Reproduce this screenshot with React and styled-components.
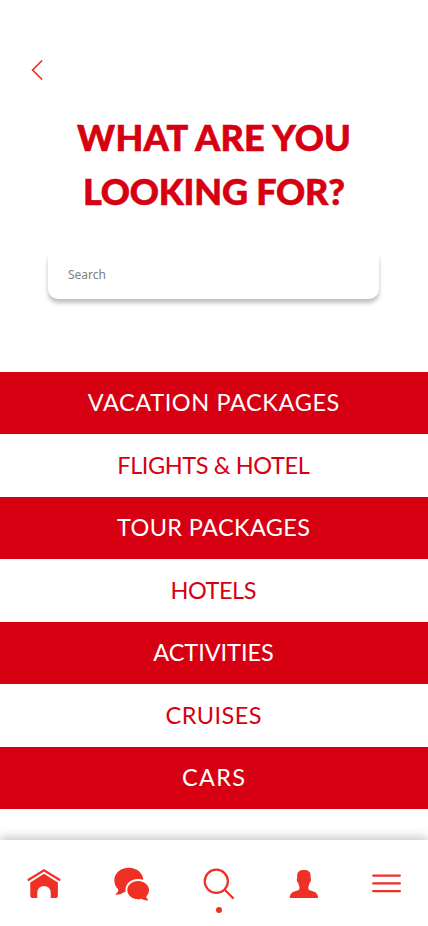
import styled, { createGlobalStyle } from "styled-components";

const GlobalStyle = createGlobalStyle`
  * {
    box-sizing: border-box;
  }

  body {
    margin: 0;
    background-color: #fff;
    font-family: Lato, sans-serif;
  }
`;

const Container = styled.div`
  width: 428px;
  height: 926px;
  display: flex;
  flex-direction: column;
  background-color: #fff;
  overflow: hidden;
`;

const BackButton = styled.button`
  width: 24px;
  height: 24px;
  margin: 58px 0 0 25px;
  padding: 0;
  border: none;
  background: none;

  svg {
    display: block;
  }
`;

const Title = styled.h1`
  height: 108px;
  margin: 28px 0 1px;
  color: #d70012;
  font-size: 36px;
  font-weight: 900;
  line-height: 54px;
  text-align: center;
  -webkit-text-stroke: 0.6px #d70012;
`;

const TitleLine = styled.span`
  display: block;
  letter-spacing: ${({ $spacing }) => $spacing}px;
  margin-right: ${({ $spacing }) => -$spacing}px;
`;

const SearchInput = styled.input`
  width: 331px;
  height: 50px;
  margin: 30px 0 0 48px;
  padding: 0 20px;
  border: none;
  border-radius: 10px;
  outline: none;
  background-color: #fff;
  box-shadow: 0 4px 4px rgba(0, 0, 0, 0.25);
  font-family: "Noto Sans", sans-serif;
  font-size: 12px;

  &::placeholder {
    color: #808080;
    opacity: 1;
  }
`;

const CategoryList = styled.ul`
  margin: 73px 0 0;
  padding: 0;
  list-style: none;
`;

const Category = styled.li`
  height: ${({ $filled }) => ($filled ? "62px" : "63px")};
  padding: 0 1px 2px 0;
  display: flex;
  align-items: center;
  justify-content: center;
  background-color: ${({ $filled }) => ($filled ? "#d70012" : "#fff")};
  color: ${({ $filled }) => ($filled ? "#fff" : "#d70012")};
  font-size: 23.5px;
`;

const CategoryName = styled.span`
  letter-spacing: ${({ $spacing }) => $spacing}px;
  margin-right: ${({ $spacing }) => -$spacing}px;
`;

const NavBar = styled.nav`
  height: 86px;
  margin-top: auto;
  padding: 24px 20px 0 24px;
  display: flex;
  justify-content: space-between;
  background-color: #fff;
  box-shadow: 0 -2px 10px rgba(0, 0, 0, 0.25);
`;

const NavItem = styled.button`
  width: 40px;
  height: 50px;
  padding: 0;
  display: flex;
  flex-direction: column;
  align-items: center;
  border: none;
  background: none;
  color: #ee3124;

  svg {
    flex: none;
  }
`;

const ActiveDot = styled.span`
  width: 6px;
  height: 6px;
  margin: 3px 0 0 6px;
  border-radius: 50%;
  background-color: #ee3124;
`;

const categories = [
  { name: "VACATION PACKAGES", spacing: 0.61 },
  { name: "FLIGHTS & HOTEL", spacing: -0.38 },
  { name: "TOUR PACKAGES", spacing: 0.36 },
  { name: "HOTELS", spacing: -0.5 },
  { name: "ACTIVITIES", spacing: -0.05 },
  { name: "CRUISES", spacing: 0.45 },
  { name: "CARS", spacing: 1.3 },
];

const BackIcon = () => (
  <svg width="24" height="24" fill="none" stroke="#ee3124" strokeWidth="1.7">
    <path d="M16.6 3 7.6 12l9 9" strokeLinecap="round" />
  </svg>
);

const HomeIcon = () => (
  <svg width="40" height="40" viewBox="24 864 40 40" fill="currentColor">
    <path
      d="M28.600 879.800 44 870.200l15.400 9.600"
      fill="none"
      stroke="currentColor"
      strokeWidth="2.2"
      strokeLinecap="round"
    />
    <path d="M44 873.800 57.900 882.400V896q0 2-2 2H50.700V892.600a6.700 6.700 0 0 0-13.400 0V898H32.300q-2 0-2-2V882.400Z" />
  </svg>
);

const ChatIcon = () => (
  <svg width="40" height="40" viewBox="110 864 40 40" fill="currentColor">
    <path d="M128.800 867.700c8 0 14.500 5.500 14.500 12.200s-6.500 12.300-14.500 12.300q-2.200 0-4.200-.5c-2.500 2-5.400 3.100-8.300 3-.8 0-.8-.7-.2-1.100 1.600-1.100 2.300-2.500 2.100-4.300-2.500-2.200-3.900-5.900-3.900-9.400 0-6.700 6.500-12.200 14.500-12.200Z" />
    <ellipse cx="138.100" cy="889.900" rx="12.600" ry="11" fill="#fff" />
    <path d="M138.100 881c6 0 10.900 4 10.900 9.100 0 2.400-1 4.600-2.700 6.200-.1 1.500.5 2.400 1.600 3.100.7.500.4 1-.4 1-2.200 0-4.200-.7-6-1.700q-1.600.6-3.400.6c-6 0-10.800-4.100-10.800-9.200s4.800-9.100 10.800-9.100Z" />
  </svg>
);

const SearchIcon = () => (
  <svg
    width="40"
    height="40"
    viewBox="196 864 40 40"
    fill="none"
    stroke="currentColor"
    strokeWidth="2.2"
    strokeLinecap="round"
  >
    <circle cx="216.300" cy="881.300" r="11.600" />
    <path d="m224.700 889.700 8.300 8.300" />
  </svg>
);

const UserIcon = () => (
  <svg width="40" height="40" viewBox="282 864 40 40" fill="currentColor">
    <path d="M303.900 870c4.500 0 6.700 2 6.700 5.800v2.400c.5.300.5 1.400.2 2.700-.2 1-.6 1.600-1.200 1.800-.2 1.500-.6 2.700-1.200 3.800v2.500c.4 1 1.600 1.500 3.600 2 4 1 6 3 6 7h-28.200c0-4 2-6 6-7 2-.5 3.200-1 3.600-2v-2.500c-.6-1.100-1-2.300-1.200-3.800-.6-.2-1-.8-1.200-1.800-.3-1.300-.3-2.400.2-2.700v-2.400c0-3.800 2.200-5.800 6.700-5.800Z" />
  </svg>
);

const MenuIcon = () => (
  <svg
    width="40"
    height="40"
    viewBox="368 864 40 40"
    stroke="currentColor"
    strokeWidth="2.2"
    strokeLinecap="round"
  >
    <path d="M373.200 875.600h26.700M373.200 883.400h26.700M373.200 891.200h26.700" />
  </svg>
);

const App = () => {
  return (
    <Container>
      <GlobalStyle />
      <BackButton aria-label="Back">
        <BackIcon />
      </BackButton>
      <Title>
        <TitleLine $spacing={0.25}>WHAT ARE YOU</TitleLine>
        <TitleLine $spacing={-0.2}>LOOKING FOR?</TitleLine>
      </Title>
      <SearchInput placeholder="Search" />
      <CategoryList>
        {categories.map(({ name, spacing }, index) => (
          <Category key={name} $filled={index % 2 === 0}>
            <CategoryName $spacing={spacing}>{name}</CategoryName>
          </Category>
        ))}
      </CategoryList>
      <NavBar>
        <NavItem aria-label="Home">
          <HomeIcon />
        </NavItem>
        <NavItem aria-label="Messages">
          <ChatIcon />
        </NavItem>
        <NavItem aria-label="Search">
          <SearchIcon />
          <ActiveDot />
        </NavItem>
        <NavItem aria-label="Profile">
          <UserIcon />
        </NavItem>
        <NavItem aria-label="Menu">
          <MenuIcon />
        </NavItem>
      </NavBar>
    </Container>
  );
};

export default App;
